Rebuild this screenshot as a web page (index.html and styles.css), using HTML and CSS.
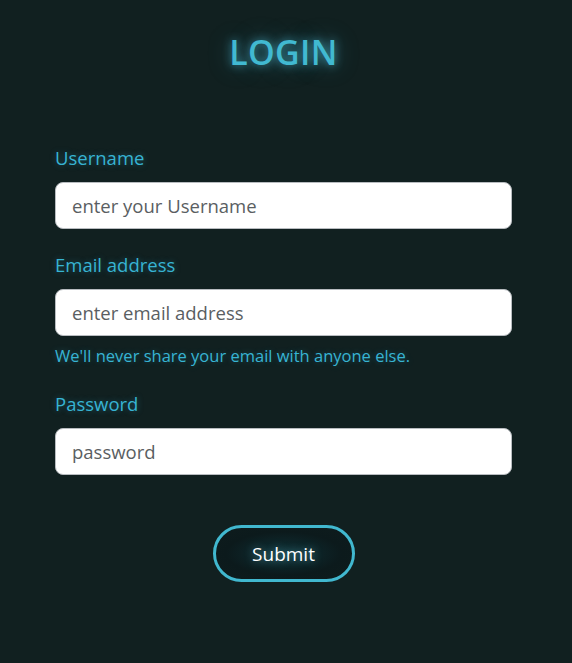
FILE: index.html
```html
<!DOCTYPE html>
<html>
<head>
<meta charset="utf-8">
<link rel="stylesheet" href="styles.css">
</head>
<body>
<main class="page">
  <h1 class="title">LOGIN</h1>
  <form class="form">
    <div class="field">
      <label class="label" for="u">Username</label>
      <input class="input" id="u" type="text" placeholder="enter your Username">
    </div>
    <div class="field">
      <label class="label" for="e">Email address</label>
      <input class="input" id="e" type="email" placeholder="enter email address">
      <div class="help">We'll never share your email with anyone else.</div>
    </div>
    <div class="field">
      <label class="label" for="p">Password</label>
      <input class="input" id="p" type="password" placeholder="password">
    </div>
    <div class="actions">
      <button class="submit" type="button">Submit</button>
    </div>
  </form>
</main>
</body>
</html>
```
FILE: styles.css
```css
html, body {
  margin: 0;
  padding: 0;
  background: #112020;
  height: 100%;
}
body {
  font-family: "Open Sans", "Noto Sans", sans-serif;
  color: #37b4d3;
}
.page {
  padding: 26px 60px 0 55px;
}
.title {
  margin: 0;
  text-align: center;
  font-size: 34px;
  font-weight: 600;
  color: #41b9d1;
  line-height: 52px;
  letter-spacing: 0.3px;
  text-shadow: 0 0 10px rgba(80, 200, 230, 0.7), 0 0 24px rgba(80, 200, 230, 0.35);
}
.form {
  margin-top: 68px;
  display: flex;
  flex-direction: column;
}
.field {
  display: flex;
  flex-direction: column;
  margin-bottom: 24px;
}
.label {
  font-size: 18.5px;
  line-height: 24px;
  margin-bottom: 12px;
  color: #37b4d3;
  text-shadow: 0 0 6px rgba(60, 180, 220, 0.35);
}
.input {
  box-sizing: border-box;
  width: 100%;
  height: 47px;
  border: 1px solid #b8bcc0;
  border-radius: 8px;
  background: #fff;
  padding: 0 16px;
  font-family: inherit;
  font-size: 18.5px;
  color: #333;
  outline: none;
}
.input::placeholder {
  color: #5a5e62;
}
.help {
  margin-top: 8px;
  font-size: 16.5px;
  line-height: 24px;
  color: #37b4d3;
  text-shadow: 0 0 6px rgba(60, 180, 220, 0.3);
}
.actions {
  display: flex;
  justify-content: center;
  margin-top: 26px;
}
.submit {
  width: 142px;
  height: 57px;
  border: 3px solid #41b8cf;
  border-radius: 30px;
  background: radial-gradient(ellipse at center, #0f3036 0%, #0c1a1c 60%, #0e1c1d 100%);
  color: #fff;
  font-family: inherit;
  font-size: 19px;
  text-shadow: 0 0 8px rgba(120, 220, 240, 0.6);
  cursor: pointer;
}
```
